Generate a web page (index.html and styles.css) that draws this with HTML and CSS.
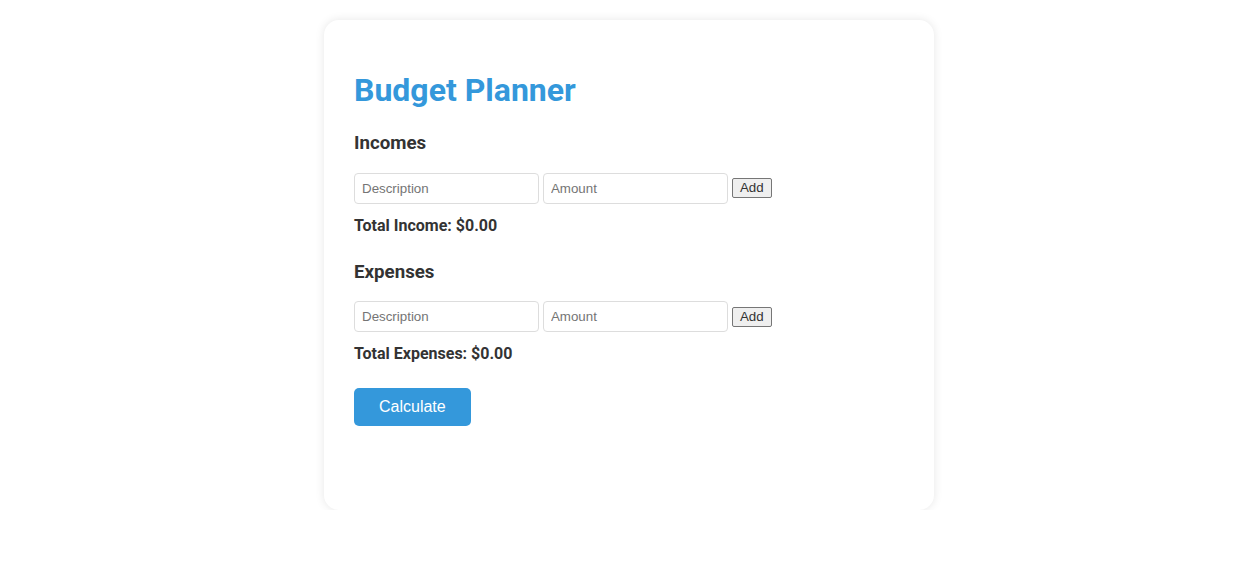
FILE: index.html
```html
<!DOCTYPE html>
<html lang="en">
<head>
<meta charset="UTF-8">
<title>Budget Planner</title>
<link rel="stylesheet" href="styles.css">
</head>
<body>
<div class="container">
  <h1 class="title">Budget Planner</h1>
  <section class="section">
    <h3 class="section-title">Incomes</h3>
    <div class="entry-row">
      <input class="field" type="text" placeholder="Description">
      <input class="field" type="number" placeholder="Amount">
      <button class="add-btn" type="button">Add</button>
    </div>
    <p class="total">Total Income: $0.00</p>
  </section>
  <section class="section">
    <h3 class="section-title">Expenses</h3>
    <div class="entry-row">
      <input class="field" type="text" placeholder="Description">
      <input class="field" type="number" placeholder="Amount">
      <button class="add-btn" type="button">Add</button>
    </div>
    <p class="total">Total Expenses: $0.00</p>
  </section>
  <div class="actions">
    <button class="calc-btn" type="button">Calculate</button>
  </div>
</div>
</body>
</html>
```
FILE: styles.css
```css
html, body {
  margin: 0;
  padding: 0;
  background: #ffffff;
}
body {
  font-family: Roboto, "Liberation Sans", Arial, sans-serif;
  color: #333333;
  padding: 20px 0 0 10px;
}
.container {
  width: 550px;
  margin: 0 auto;
  padding: 30px 30px 84px;
  background: #ffffff;
  border-radius: 15px;
  box-shadow: 0 0 10px rgba(0, 0, 0, 0.1);
}
.title {
  color: #3498db;
  font-size: 32px;
  font-weight: 700;
  margin: 21px 0 23px;
}
.section-title {
  font-size: 18.72px;
  font-weight: 700;
  margin: 18.72px 0;
}
.section + .section {
  margin-top: 26px;
}
.entry-row {
  font-size: 16px;
}
.field {
  width: 169px;
  padding: 7px;
  border: 1px solid #dddddd;
  border-radius: 4px;
  font-family: "Liberation Sans", Arial, sans-serif;
  font-size: 13.333px;
  color: #333;
  margin: 0;
  vertical-align: middle;
  -moz-appearance: textfield;
}
.field::placeholder {
  color: #757575;
}
.field::-webkit-outer-spin-button,
.field::-webkit-inner-spin-button {
  -webkit-appearance: none;
  margin: 0;
}
.add-btn {
  font-family: "Liberation Sans", Arial, sans-serif;
  font-size: 13.333px;
  line-height: 16px;
  color: #333;
  background: #efefef;
  border: 1px solid #767676;
  border-radius: 2px;
  padding: 1px 7px;
  margin: 0;
  vertical-align: middle;
}
.total {
  font-weight: 700;
  font-size: 16px;
  margin: 12px 0 0;
}
.actions {
  margin-top: 25px;
}
.calc-btn {
  font-family: "Liberation Sans", Arial, sans-serif;
  font-size: 16px;
  color: #ffffff;
  background: #3498db;
  border: none;
  border-radius: 5px;
  padding: 10px 25px;
}
```
